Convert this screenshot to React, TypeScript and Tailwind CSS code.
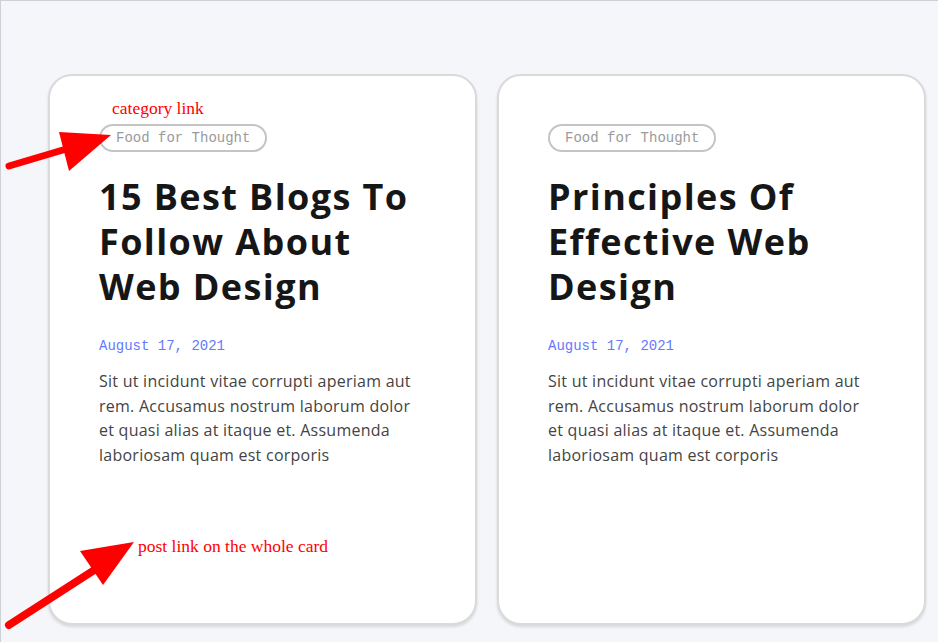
import React from 'react';

interface Post {
  id: number;
  category: string;
  title: string;
  date: string;
  excerpt: string;
}

const posts: Post[] = [
  {
    id: 1,
    category: 'Food for Thought',
    title: '15 Best Blogs To Follow About Web Design',
    date: 'August 17, 2021',
    excerpt:
      'Sit ut incidunt vitae corrupti aperiam aut rem. Accusamus nostrum laborum dolor et quasi alias at itaque et. Assumenda laboriosam quam est corporis',
  },
  {
    id: 2,
    category: 'Food for Thought',
    title: 'Principles Of Effective Web Design',
    date: 'August 17, 2021',
    excerpt:
      'Sit ut incidunt vitae corrupti aperiam aut rem. Accusamus nostrum laborum dolor et quasi alias at itaque et. Assumenda laboriosam quam est corporis',
  },
];

const PostCard: React.FC<{ post: Post }> = ({ post }) => (
  <a
    href="#"
    className="block w-[429px] h-[551px] shrink-0 rounded-[24px] border-2 border-[#dadada] bg-white pl-[49px] pr-[40px] pt-[48px] shadow-[0_2px_3px_rgba(0,0,0,0.12)]"
  >
    <span className="inline-block rounded-full border-2 border-[#c4c4c4] px-[15px] py-[2px] text-[14px] leading-[20px] text-[#9a9a9a] font-['Liberation_Mono',monospace]">
      {post.category}
    </span>
    <h2 className="mt-[22px] text-[36px] leading-[45px] font-bold text-[#161616] font-['Open_Sans',sans-serif] tracking-[1.4px]">
      {post.title}
    </h2>
    <div className="mt-[27px] text-[14px] leading-[20px] text-[#6479ff] font-['Liberation_Mono',monospace]">
      {post.date}
    </div>
    <p className="mt-[13px] max-w-[320px] text-[16px] leading-[24.5px] tracking-[0.25px] text-[#444] font-['Open_Sans',sans-serif]">
      {post.excerpt}
    </p>
  </a>
);

export default function App() {
  return (
    <div className="relative min-h-[642px] overflow-hidden border-t border-l border-[#cdd0d6] bg-[#f5f6fa]">
      <div className="flex gap-[20px] pl-[47px] pt-[73px]">
        {posts.map((post) => (
          <PostCard key={post.id} post={post} />
        ))}
      </div>

      {/* annotations */}
      <span className="absolute left-[111px] top-[96px] text-[17.5px] leading-[22px] text-[#ff0000] font-['Liberation_Serif',serif]">
        category link
      </span>
      <svg className="absolute left-0 top-[120px]" width="110" height="60" viewBox="0 120 110 60">
        <line x1="8" y1="165" x2="72" y2="146" stroke="#ff0000" strokeWidth="7" strokeLinecap="round" />
        <polygon points="58,131 110,134 68,170" fill="#ff0000" />
      </svg>

      <span className="absolute left-[137px] top-[534px] text-[17.5px] leading-[22px] text-[#ff0000] font-['Liberation_Serif',serif]">
        post link on the whole card
      </span>
      <svg className="absolute left-0 top-[530px]" width="140" height="100" viewBox="0 530 140 100">
        <line x1="8" y1="624" x2="98" y2="566" stroke="#ff0000" strokeWidth="8" strokeLinecap="round" />
        <polygon points="79,550 133,541 102,584" fill="#ff0000" />
      </svg>
    </div>
  );
}
